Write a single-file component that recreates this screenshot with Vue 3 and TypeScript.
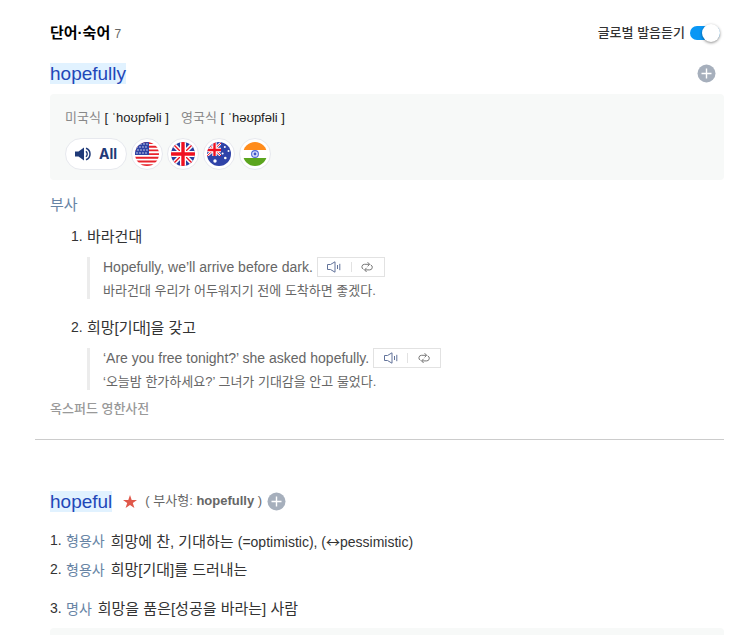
<script setup lang="ts">
import { ref } from 'vue'

interface Example {
  en: string
  ko: string
}
interface Sense {
  meaning: string
  example: Example
}
interface Definition {
  pos: string
  meaning: string
  synonym?: string
  antonym?: string
  spaced?: boolean
}

const globalAudio = ref(true)
const stars: [number, number][] = [3, 6, 9, 12].flatMap((x) =>
  [2, 5, 8, 11].map((y, i): [number, number] => [i % 2 ? x - 1 : x, y]),
)

const pronunciations = [
  { region: '미국식', ipa: '[ ˈhoʊpfəli ]' },
  { region: '영국식', ipa: '[ ˈhəʊpfəli ]' },
]

const senses: Sense[] = [
  {
    meaning: '바라건대',
    example: {
      en: 'Hopefully, we’ll arrive before dark.',
      ko: '바라건대 우리가 어두워지기 전에 도착하면 좋겠다.',
    },
  },
  {
    meaning: '희망[기대]을 갖고',
    example: {
      en: '‘Are you free tonight?’ she asked hopefully.',
      ko: '‘오늘밤 한가하세요?’ 그녀가 기대감을 안고 물었다.',
    },
  },
]

const definitions: Definition[] = [
  { pos: '형용사', meaning: '희망에 찬, 기대하는', synonym: 'optimistic', antonym: 'pessimistic' },
  { pos: '형용사', meaning: '희망[기대]를 드러내는' },
  { pos: '명사', meaning: '희망을 품은[성공을 바라는] 사람', spaced: true },
]
</script>

<template>
  <main class="page" lang="ko">
    <header class="head">
      <h2 class="title">단어·숙어 <span class="count">7</span></h2>
      <label class="switch">
        글로벌 발음듣기
        <input v-model="globalAudio" type="checkbox" class="toggle" />
      </label>
    </header>

    <section class="entry">
      <div class="word-row">
        <a href="#" class="word">hopefully</a>
        <button type="button" class="add push" aria-label="단어장에 추가">
          <svg viewBox="0 0 19 19"><circle cx="9.5" cy="9.5" r="9" fill="#a6afbc" /><path d="M9.5 4.5v10M4.5 9.5h10" stroke="#fff" stroke-width="1.4" /></svg>
        </button>
      </div>

      <div class="sound-box">
        <p class="ipa-row">
          <span v-for="p in pronunciations" :key="p.region" class="ipa">
            <span class="region">{{ p.region }}</span> {{ p.ipa }}
          </span>
        </p>
        <div class="flags">
          <button type="button" class="all">
            <svg class="speaker" viewBox="0 0 17 14">
              <path d="M0 4.5h3.5L9 0.5v13L3.5 9.5H0z" fill="#1f3a78" />
              <path d="M11 4.2a4 4 0 0 1 0 5.6M11 1.2a6.2 6.2 0 0 1 0 11.6" fill="none" stroke="#1f3a78" stroke-width="1.5" />
            </svg>
            All
          </button>
          <button type="button" class="flag" aria-label="미국">
            <svg viewBox="0 0 24 24">
              <clipPath id="us"><circle cx="12" cy="12" r="12" /></clipPath>
              <g clip-path="url(#us)">
                <path fill="#fff" d="M0 0h24v24H0z" />
                <path stroke="#e8222b" stroke-width="1.9" d="M0 1h24M0 4.7h24M0 8.4h24M0 12.1h24M0 15.8h24M0 19.5h24M0 23.2h24" />
                <path fill="#2f43a4" d="M0 0h14v13H0z" />
                <circle v-for="(s, i) in stars" :key="i" :cx="s[0]" :cy="s[1]" r="0.65" fill="#fff" />
              </g>
            </svg>
          </button>
          <button type="button" class="flag" aria-label="영국">
            <svg viewBox="0 0 24 24">
              <clipPath id="gb"><circle cx="12" cy="12" r="12" /></clipPath>
              <g clip-path="url(#gb)">
                <path fill="#2b3fa0" d="M0 0h24v24H0z" />
                <path stroke="#fff" stroke-width="4.4" d="M0 0l24 24M24 0L0 24" />
                <path stroke="#f01020" stroke-width="1.4" d="M0 0l24 24M24 0L0 24" />
                <path stroke="#fff" stroke-width="6" d="M12 0v24M0 12h24" />
                <path stroke="#f01020" stroke-width="3.4" d="M12 0v24M0 12h24" />
              </g>
            </svg>
          </button>
          <button type="button" class="flag" aria-label="호주">
            <svg viewBox="0 0 24 24">
              <clipPath id="au"><circle cx="12" cy="12" r="12" /></clipPath>
              <clipPath id="au-jack"><path d="M0 0h14v14H0z" /></clipPath>
              <g clip-path="url(#au)">
                <path fill="#2f43a8" d="M0 0h24v24H0z" />
                <g clip-path="url(#au-jack)">
                  <path stroke="#fff" stroke-width="2.6" d="M0 1l14 13M14 1L0 14" />
                  <path stroke="#f01020" stroke-width="1" d="M0 1l14 13M14 1L0 14" />
                  <path stroke="#fff" stroke-width="4.4" d="M7.5 0v14M0 8h14" />
                  <path stroke="#f01020" stroke-width="2.4" d="M7.5 0v14M0 8h14" />
                </g>
                <g fill="#fff">
                  <circle cx="8" cy="19" r="1.7" /><circle cx="17.8" cy="5" r="1" />
                  <circle cx="21.5" cy="9" r="1" /><circle cx="15.6" cy="11.5" r="1" />
                  <circle cx="18.3" cy="16" r="1.3" />
                </g>
              </g>
            </svg>
          </button>
          <button type="button" class="flag" aria-label="인도">
            <svg viewBox="0 0 24 24">
              <clipPath id="in"><circle cx="12" cy="12" r="12" /></clipPath>
              <g clip-path="url(#in)">
                <path fill="#fff" d="M0 0h24v24H0z" />
                <path fill="#ff8c1c" d="M0 0h24v8H0z" />
                <path fill="#5ba51e" d="M0 16h24v8H0z" />
                <circle cx="12" cy="12" r="3.4" fill="#dde2fa" stroke="#5068d8" stroke-width="1.1" />
                <circle cx="12" cy="12" r="1.4" fill="#3c55cc" />
              </g>
            </svg>
          </button>
        </div>
      </div>

      <h3 class="part">부사</h3>
      <ol class="senses">
        <li v-for="(s, i) in senses" :key="i" class="sense">
          <p class="line"><span class="num">{{ i + 1 }}.</span><span class="meaning">{{ s.meaning }}</span></p>
          <div class="example">
            <div class="example-en">
              <span>{{ s.example.en }}</span>
              <span class="tools">
                <button type="button" class="tool" aria-label="발음 듣기">
                  <svg viewBox="0 0 14 12" fill="none" stroke="#62739a">
                    <path d="M.5 3.5h3L8 .8v10.4L3.5 8.5h-3z" />
                    <path d="M10.5 4v4M12.8 2.8v6.4" />
                  </svg>
                </button>
                <button type="button" class="tool" aria-label="반복 듣기">
                  <svg viewBox="0 0 14 12" fill="none" stroke="#777">
                    <path d="M3.5 8.3A2.6 2.6 0 0 1 4.500 3.300h5M7.600 1.200l2 2.100-2 2.100" />
                    <path d="M10.700 3.900A2.600 2.600 0 0 1 9.700 8.900h-5M6.600 6.800l-2 2.100 2 2.100" />
                  </svg>
                </button>
              </span>
            </div>
            <p class="example-ko">{{ s.example.ko }}</p>
          </div>
        </li>
      </ol>
      <p class="source">옥스퍼드 영한사전</p>
    </section>

    <hr class="rule" />

    <section class="entry">
      <div class="word-row">
        <a href="#" class="word">hopeful</a>
        <svg class="star" viewBox="0 0 14 13"><path fill="#e0584a" d="M7 0l1.700 4.900H14L9.800 8l1.600 5L7 10l-4.400 3 1.600-5L0 4.900h5.300z" /></svg>
        <span class="form">( 부사형: <b>hopefully</b> )</span>
        <button type="button" class="add" aria-label="단어장에 추가">
          <svg viewBox="0 0 19 19"><circle cx="9.5" cy="9.5" r="9" fill="#a6afbc" /><path d="M9.5 4.5v10M4.5 9.5h10" stroke="#fff" stroke-width="1.4" /></svg>
        </button>
      </div>
      <ol class="defs">
        <li v-for="(d, i) in definitions" :key="i" class="line" :class="{ spaced: d.spaced }">
          <span class="num">{{ i + 1 }}.</span>
          <span class="pos">{{ d.pos }}</span>
          <span class="meaning">{{ d.meaning }} <span v-if="d.synonym" class="note">(={{ d.synonym }}), (<span class="arrow">↔</span>{{ d.antonym }})</span></span>
        </li>
      </ol>
      <div class="next"></div>
    </section>
  </main>
</template>

<style>
body {
  background: #fff;
}
</style>

<style scoped>
.page {
  padding: 20px 19px 0 35px;
  font-family: 'Liberation Sans', 'Noto Sans CJK KR', sans-serif;
  font-size: 14px;
  line-height: 24px;
  color: #333;
}
h2, h3, p, ol {
  margin: 0;
  padding: 0;
  font-weight: 400;
  list-style: none;
}
button {
  margin: 0;
  padding: 0;
  border: 0;
  background: none;
  font: inherit;
  cursor: pointer;
}
svg {
  display: block;
}
.head {
  display: flex;
  justify-content: space-between;
  align-items: center;
  height: 26px;
  padding: 0 4px 0 15px;
}
.title {
  font-size: 15px;
  font-weight: 700;
  color: #000;
}
.count {
  font-size: 12px;
  font-weight: 400;
  color: #666;
}
.switch {
  display: flex;
  align-items: center;
  gap: 5px;
  font-size: 13px;
  font-weight: 500;
}
.toggle {
  position: relative;
  appearance: none;
  width: 30px;
  height: 14px;
  margin: 0;
  border-radius: 7px;
  background: #bbb;
}
.toggle:checked {
  background: #0a97f5;
}
.toggle::before {
  content: '';
  position: absolute;
  top: -2px;
  left: 0;
  width: 18px;
  height: 18px;
  border-radius: 50%;
  background: #fff;
  box-shadow: 0 1px 3px rgba(0, 0, 0, 0.45);
}
.toggle:checked::before {
  left: 12px;
}
.entry {
  padding-left: 15px;
}
.word-row {
  display: flex;
  align-items: center;
  height: 24px;
  margin-top: 15px;
}
.word {
  background: #e1f2ff;
  color: #1f47b8;
  font-size: 19px;
  line-height: 21px;
  text-decoration: none;
}
.add {
  width: 19px;
  height: 19px;
}
.push {
  margin: 0 8px 0 auto;
}
.star {
  width: 14px;
  height: 13px;
  margin: 0 8px 0 11px;
}
.form {
  margin-right: 5px;
  font-size: 13px;
  color: #666;
}
.sound-box {
  margin-top: 9px;
  padding: 14px 15px 10px;
  border-radius: 4px;
  background: #f7f9f8;
}
.ipa-row {
  display: flex;
  gap: 12px;
  font-size: 13px;
  line-height: 20px;
  color: #222;
}
.region {
  color: #888;
}
.flags {
  display: flex;
  gap: 4px;
  margin-top: 10px;
}
.all,
.flag {
  display: flex;
  align-items: center;
  justify-content: center;
  box-sizing: border-box;
  height: 32px;
  border: 1px solid #e7e9ee;
  border-radius: 16px;
  background: #fff;
}
.all {
  gap: 7px;
  width: 62px;
  font-family: Inter, sans-serif;
  font-weight: 700;
  color: #1f3a78;
}
.speaker {
  width: 17px;
  height: 14px;
}
.flag {
  width: 32px;
}
.flag svg {
  width: 24px;
  height: 24px;
}
.part {
  margin-top: 13px;
  font-size: 15px;
  color: #6784a5;
}
.senses {
  display: grid;
  gap: 9px;
  padding-top: 8px;
}
.sense {
  padding-left: 21px;
}
.sense + .sense {
  padding-top: 8px;
}
.line {
  display: flex;
}
.num {
  width: 16px;
  line-height: 22px;
}
.meaning {
  font-size: 15px;
}
.example {
  margin-top: 8px;
  margin-left: 16px;
  padding-left: 13px;
  border-left: 3px solid #ececec;
  color: #666;
}
.example-en {
  display: flex;
  align-items: center;
  gap: 4px;
  line-height: 20px;
}
.example-ko {
  padding-top: 6px;
  font-size: 13px;
  line-height: 16px;
}
.tools {
  display: flex;
  box-sizing: border-box;
  height: 20px;
  border: 1px solid #e2e2e2;
}
.tool {
  display: flex;
  align-items: center;
  justify-content: center;
  width: 33px;
}
.tool + .tool {
  background: linear-gradient(#e2e2e2, #e2e2e2) left center / 1px 10px no-repeat;
}
.tool svg {
  width: 14px;
  height: 12px;
}
.source {
  margin-top: 9px;
  font-size: 13px;
  font-weight: 500;
  line-height: 20px;
  color: #999;
}
.rule {
  margin: 20px 0 49px;
  border: 0;
  border-top: 1px solid #ccc;
}
.defs {
  display: grid;
  gap: 4px;
  margin-top: 16px;
}
.pos {
  margin-right: 6px;
  color: #6784a5;
}
.note {
  font-size: 14px;
}
.arrow {
  font-family: 'Noto Sans CJK KR', sans-serif;
}
.spaced {
  margin-top: 11px;
}
.next {
  height: 7px;
  margin-top: 7px;
  border-radius: 4px 4px 0 0;
  background: #f7f9f8;
}
</style>
